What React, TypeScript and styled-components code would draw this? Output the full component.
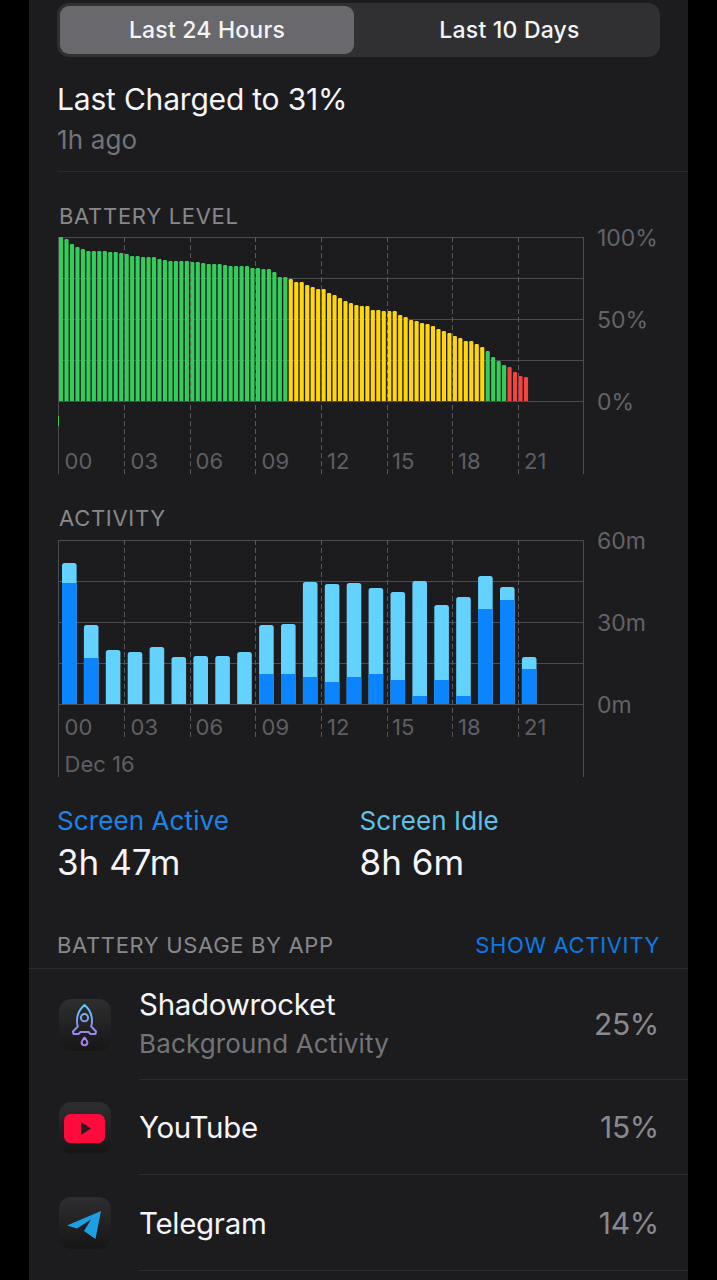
import styled, { createGlobalStyle } from "styled-components";

const GlobalStyle = createGlobalStyle`
    html, body {
        margin: 0;
        padding: 0;
        background: #000;
    }
    * {
        box-sizing: border-box;
    }
`;

const fontStack = `Inter, "Liberation Sans", sans-serif`;

const Page = styled.div`
    width: 717px;
    height: 1280px;
    padding: 0 29px;
    background: #000;
    overflow: hidden;
    font-family: ${fontStack};
`;

const Panel = styled.div`
    height: 1280px;
    background: #1c1c1e;
    padding-top: 3px;
`;

const Segmented = styled.div`
    width: 603px;
    height: 54px;
    margin-left: 28px;
    padding: 3px;
    display: grid;
    grid-template-columns: 294px 1fr;
    border-radius: 12px;
    background: #303033;
`;

const Segment = styled.div<{ $active?: boolean }>`
    display: flex;
    align-items: center;
    justify-content: center;
    padding-left: ${(p) => (p.$active ? 0 : 8)}px;
    border-radius: 9px;
    font-size: 23px;
    font-weight: 500;
    letter-spacing: 0.2px;
    color: #f4f4f6;
    background: ${(p) => (p.$active ? "#68686d" : "transparent")};
`;

const LastCharged = styled.div`
    margin-left: 28px;
    padding-top: 22px;
    height: 115px;
    border-bottom: 1px solid #2c2c2e;
`;

const ChargedTitle = styled.div`
    font-size: 30px;
    line-height: 40px;
    letter-spacing: -0.2px;
    color: #f5f5f7;
`;

const ChargedAgo = styled.div`
    font-size: 26px;
    line-height: 41px;
    letter-spacing: 0.15px;
    color: #737378;
`;

const ChartTitle = styled.div<{ $top: number }>`
    margin: ${(p) => p.$top}px 0 0 30px;
    font-size: 22px;
    line-height: 24px;
    letter-spacing: 0.7px;
    color: #88888c;
`;

const ChartSvg = styled.svg`
    display: block;
    margin-left: 28px;
    overflow: visible;
`;

const TickText = styled.text`
    font-family: ${fontStack};
    font-size: 22px;
    fill: #5f5f63;
`;

const ValueText = styled.text`
    font-family: ${fontStack};
    font-size: 23px;
    fill: #636367;
`;

const Legend = styled.div`
    display: flex;
    margin: 23px 0 0 28px;
`;

const LegendItem = styled.div`
    width: 302.5px;
`;

const LegendLabel = styled.div<{ $color: string }>`
    font-size: 26px;
    line-height: 36px;
    letter-spacing: 0.1px;
    color: ${(p) => p.$color};
`;

const LegendValue = styled.div`
    font-size: 35px;
    line-height: 46px;
    color: #f5f5f7;
`;

const UsageHeader = styled.div`
    height: 48px;
    margin-top: 36px;
    padding: 0 28px 0 28px;
    display: flex;
    align-items: center;
    justify-content: space-between;
    border-bottom: 1px solid #2c2c2e;
    font-size: 22px;
    letter-spacing: 0.65px;
`;

const UsageTitle = styled.span`
    color: #88888c;
`;

const UsageAction = styled.span`
    color: #0a7ae6;
`;

const AppRow = styled.div<{ $height: number }>`
    height: ${(p) => p.$height}px;
    display: flex;
    align-items: center;
    padding-left: 30px;
`;

const AppIcon = styled.div`
    width: 52px;
    height: 52px;
    flex: none;
    display: flex;
    align-items: center;
    justify-content: center;
    border-radius: 12px;
    background: linear-gradient(180deg, #2e2e30 0%, #161617 100%);
`;

const AppBody = styled.div`
    flex: 1;
    align-self: stretch;
    margin-left: 28px;
    padding-right: 29px;
    display: flex;
    align-items: center;
    justify-content: space-between;
    border-bottom: 1px solid #2c2c2e;
`;

const AppName = styled.div`
    font-size: 29.5px;
    line-height: 40px;
    letter-spacing: -0.3px;
    color: #f5f5f7;
`;

const AppSub = styled.div`
    font-size: 26px;
    line-height: 40px;
    letter-spacing: 0.15px;
    color: #737378;
`;

const AppPercent = styled.div`
    font-size: 30px;
    letter-spacing: -0.3px;
    color: #8a8a8e;
`;

const gridVerticals = [124, 190, 255, 321, 387, 452, 518];
const hours = ["00", "03", "06", "09", "12", "15", "18", "21"];
const hourX = [64.5, 130.5, 195.5, 261.5, 327, 392, 458, 524];

// bar tops in page px, one bar per 15 minutes
const batteryTops = [
    237, 239, 244, 247, 249, 251, 251, 251, 251, 252, 252, 253, 254, 256, 256, 257,
    257, 257, 259, 260, 261, 261, 261, 261, 262, 262, 263, 264, 264, 264, 265, 266,
    266, 266, 266, 268, 268, 269, 269, 272, 277, 277, 279, 282, 282, 285, 287, 289,
    289, 293, 295, 298, 301, 303, 305, 306, 306, 310, 310, 311, 311, 311, 315, 317,
    320, 321, 323, 324, 326, 329, 331, 333, 336, 338, 341, 341, 344, 347, 351, 357,
    361, 365, 367, 372, 376, 377,
];

const batteryColor = (i: number) => {
    if (i < 42) return "#32cd5a";
    if (i < 78) return "#ffd60a";
    if (i < 82) return "#32cd5a";
    return "#f5443b";
};

// [light top, dark top] in page px, one bar per hour
const activityBars: [number, number][] = [
    [563, 583], [625, 658], [650, 704], [652, 704], [647, 704], [657, 704],
    [656, 704], [656, 704], [652, 704], [625, 674], [624, 674], [582, 677],
    [584, 682], [583, 677], [588, 674], [592, 680], [581, 696], [605, 680],
    [597, 696], [576, 609], [587, 600], [657, 669],
];

function BarTop(props: { x: number; y: number; w: number; bottom: number; color: string; r: number }) {
    const { x, y, w, bottom, color, r } = props;
    return (
        <path
            d={`M${x} ${bottom}V${y + r}Q${x} ${y} ${x + r} ${y}H${x + w - r}Q${x + w} ${y} ${x + w} ${y + r}V${bottom}Z`}
            fill={color}
        />
    );
}

function Grid(props: { top: number; end: number }) {
    const { top, end } = props;
    return (
        <g>
            {[0, 41, 82, 123, 164].map((d) => (
                <line key={d} x1={58} x2={584} y1={top + d + 0.5} y2={top + d + 0.5} stroke="#4c4c4f" strokeWidth={1} />
            ))}
            <line x1={58.5} x2={58.5} y1={top} y2={end} stroke="#4c4c4f" />
            <line x1={583.5} x2={583.5} y1={top} y2={end} stroke="#4c4c4f" />
        </g>
    );
}

// the dashed hour lines run over the bars
function HourLines(props: { top: number; end: number }) {
    const { top, end } = props;
    return (
        <g>
            {gridVerticals.map((x) => (
                <line key={x} x1={x + 0.5} x2={x + 0.5} y1={top} y2={end} stroke="#5a5a5d" strokeWidth={1} strokeDasharray="5 3" />
            ))}
        </g>
    );
}

function AxisLabels(props: { top: number; baseline: number; labels: string[] }) {
    const { top, baseline, labels } = props;
    return (
        <g>
            {labels.map((label, i) => (
                <ValueText key={label} x={597} y={top + i * 82 + 9}>{label}</ValueText>
            ))}
            {hours.map((h, i) => (
                <TickText key={h} x={hourX[i]} y={baseline}>{h}</TickText>
            ))}
        </g>
    );
}

function BatteryChart() {
    return (
        <ChartSvg width={603} height={249} viewBox="57 228 603 249">
            <Grid top={237} end={474} />
            {batteryTops.map((top, i) => (
                <BarTop key={i} x={59 + i * 5.47} y={top} w={4.1} bottom={401} color={batteryColor(i)} r={1.2} />
            ))}
            <HourLines top={237} end={474} />
            <line x1={58.5} x2={58.5} y1={416} y2={426} stroke="#32cd5a" />
            <AxisLabels top={237} baseline={469} labels={["100%", "50%", "0%"]} />
        </ChartSvg>
    );
}

function ActivityChart() {
    return (
        <ChartSvg width={603} height={250} viewBox="57 530 603 250">
            <Grid top={540} end={777} />
            <HourLines top={540} end={737} />
            {activityBars.map(([light, dark], i) => (
                <g key={i}>
                    <BarTop x={62 + i * 21.9} y={light} w={14.6} bottom={704} color="#64d2ff" r={2.5} />
                    {dark < 704 && <rect x={62 + i * 21.9} y={dark} width={14.6} height={704 - dark} fill="#0a84ff" />}
                </g>
            ))}
            <AxisLabels top={540} baseline={735} labels={["60m", "30m", "0m"]} />
            <TickText x={64.5} y={772}>Dec 16</TickText>
        </ChartSvg>
    );
}

function ShadowrocketIcon() {
    return (
        <svg width="52" height="52" viewBox="0 0 52 52" fill="none">
            <defs>
                <linearGradient id="rocket" x1="0" y1="6" x2="0" y2="48" gradientUnits="userSpaceOnUse">
                    <stop offset="0" stopColor="#5fd0f5" />
                    <stop offset="0.5" stopColor="#8a8cf0" />
                    <stop offset="1" stopColor="#b07cf0" />
                </linearGradient>
            </defs>
            <g stroke="url(#rocket)" strokeWidth="2" strokeLinejoin="round">
                <path d="M25.5 6C20.5 10 18 16 18 22C18 24 18.3 26 18.8 27.5L14 32.5L14.5 35H19.5L21.5 33H29.5L31.5 35H36.5L37 32.5L32.2 27.5C32.7 26 33 24 33 22C33 16 30.5 10 25.5 6Z" />
                <circle cx="25.5" cy="18.7" r="3.6" />
                <path d="M25.5 38.5C23.5 41 22.6 42 22.6 43.3C22.6 44.9 23.9 46.2 25.5 46.2C27.1 46.2 28.4 44.9 28.4 43.3C28.4 42 27.5 41 25.5 38.5Z" />
            </g>
        </svg>
    );
}

function YoutubeIcon() {
    return (
        <svg width="52" height="52" viewBox="0 0 52 52">
            <rect x="5" y="12" width="41" height="29" rx="6.5" fill="#ff0a3c" />
            <path d="M22 20L32 26.5L22 33Z" fill="#2a1a1e" />
        </svg>
    );
}

function TelegramIcon() {
    return (
        <svg width="52" height="52" viewBox="0 0 52 52">
            <path d="M8 28.5L42 14L36.5 42L25 34L32 22.5L18 31.5Z" fill="#1d9fe4" />
        </svg>
    );
}

function App() {
    return (
        <Page>
            <GlobalStyle />
            <Panel>
                <Segmented>
                    <Segment $active>Last 24 Hours</Segment>
                    <Segment>Last 10 Days</Segment>
                </Segmented>
                <LastCharged>
                    <ChargedTitle>Last Charged to 31%</ChargedTitle>
                    <ChargedAgo>1h ago</ChargedAgo>
                </LastCharged>
                <ChartTitle $top={32}>BATTERY LEVEL</ChartTitle>
                <BatteryChart />
                <ChartTitle $top={29}>ACTIVITY</ChartTitle>
                <ActivityChart />
                <Legend>
                    <LegendItem>
                        <LegendLabel $color="#1a84e8">Screen Active</LegendLabel>
                        <LegendValue>3h 47m</LegendValue>
                    </LegendItem>
                    <LegendItem>
                        <LegendLabel $color="#5cc2e6">Screen Idle</LegendLabel>
                        <LegendValue>8h 6m</LegendValue>
                    </LegendItem>
                </Legend>
                <UsageHeader>
                    <UsageTitle>BATTERY USAGE BY APP</UsageTitle>
                    <UsageAction>SHOW ACTIVITY</UsageAction>
                </UsageHeader>
                <AppRow $height={111}>
                    <AppIcon><ShadowrocketIcon /></AppIcon>
                    <AppBody>
                        <div>
                            <AppName>Shadowrocket</AppName>
                            <AppSub>Background Activity</AppSub>
                        </div>
                        <AppPercent>25%</AppPercent>
                    </AppBody>
                </AppRow>
                <AppRow $height={95}>
                    <AppIcon><YoutubeIcon /></AppIcon>
                    <AppBody>
                        <AppName>YouTube</AppName>
                        <AppPercent>15%</AppPercent>
                    </AppBody>
                </AppRow>
                <AppRow $height={96}>
                    <AppIcon><TelegramIcon /></AppIcon>
                    <AppBody>
                        <AppName>Telegram</AppName>
                        <AppPercent>14%</AppPercent>
                    </AppBody>
                </AppRow>
            </Panel>
        </Page>
    );
}

export default App;
